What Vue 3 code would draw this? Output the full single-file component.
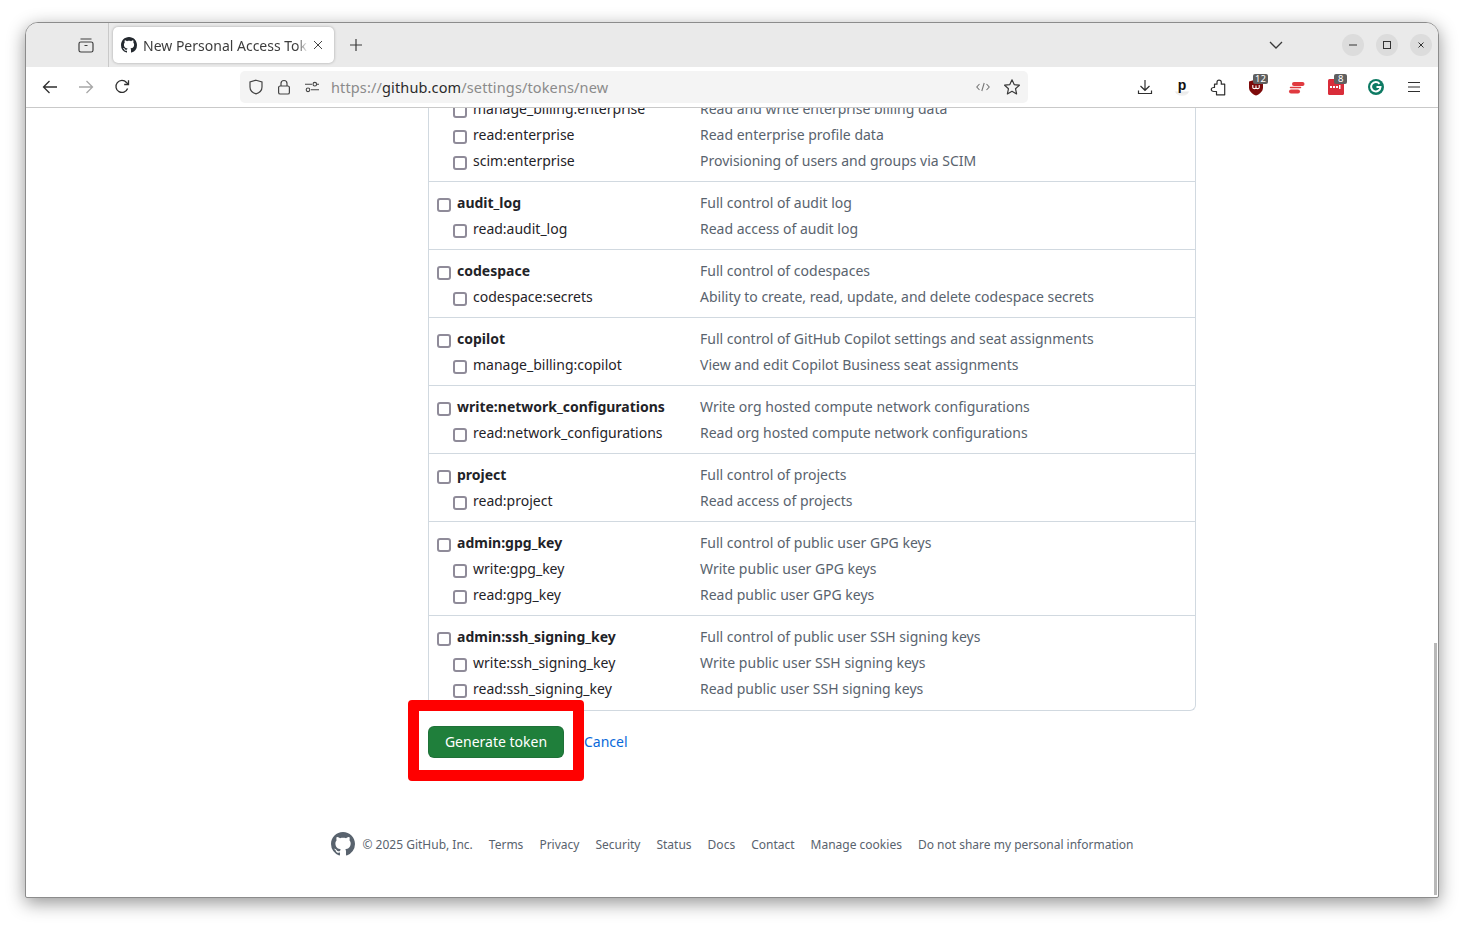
<script setup>
const groups = [
  { rows: [
    { n: 'manage_billing:enterprise', d: 'Read and write enterprise billing data' },
    { n: 'read:enterprise', d: 'Read enterprise profile data' },
    { n: 'scim:enterprise', d: 'Provisioning of users and groups via SCIM' },
  ] },
  { rows: [
    { n: 'audit_log', d: 'Full control of audit log', top: true },
    { n: 'read:audit_log', d: 'Read access of audit log' },
  ] },
  { rows: [
    { n: 'codespace', d: 'Full control of codespaces', top: true },
    { n: 'codespace:secrets', d: 'Ability to create, read, update, and delete codespace secrets' },
  ] },
  { rows: [
    { n: 'copilot', d: 'Full control of GitHub Copilot settings and seat assignments', top: true },
    { n: 'manage_billing:copilot', d: 'View and edit Copilot Business seat assignments' },
  ] },
  { rows: [
    { n: 'write:network_configurations', d: 'Write org hosted compute network configurations', top: true },
    { n: 'read:network_configurations', d: 'Read org hosted compute network configurations' },
  ] },
  { rows: [
    { n: 'project', d: 'Full control of projects', top: true },
    { n: 'read:project', d: 'Read access of projects' },
  ] },
  { rows: [
    { n: 'admin:gpg_key', d: 'Full control of public user GPG keys', top: true },
    { n: 'write:gpg_key', d: 'Write public user GPG keys' },
    { n: 'read:gpg_key', d: 'Read public user GPG keys' },
  ] },
  { rows: [
    { n: 'admin:ssh_signing_key', d: 'Full control of public user SSH signing keys', top: true },
    { n: 'write:ssh_signing_key', d: 'Write public user SSH signing keys' },
    { n: 'read:ssh_signing_key', d: 'Read public user SSH signing keys' },
  ] },
]
const footer = ['Terms', 'Privacy', 'Security', 'Status', 'Docs', 'Contact', 'Manage cookies', 'Do not share my personal information']
const octo = 'M8 0c4.42 0 8 3.58 8 8a8.013 8.013 0 0 1-5.45 7.59c-.4.08-.55-.17-.55-.38 0-.27.01-1.13.01-2.2 0-.75-.25-1.23-.54-1.48 1.78-.2 3.65-.88 3.65-3.95 0-.88-.31-1.59-.82-2.15.08-.2.36-1.02-.08-2.12 0 0-.67-.22-2.2.82-.64-.18-1.32-.27-2-.27-.68 0-1.36.09-2 .27-1.53-1.03-2.2-.82-2.2-.82-.44 1.1-.16 1.92-.08 2.12-.51.56-.82 1.28-.82 2.15 0 3.06 1.86 3.75 3.64 3.95-.23.2-.44.55-.51 1.07-.46.21-1.61.55-2.33-.66-.15-.24-.6-.83-1.23-.82-.67.01-.27.38.01.53.34.19.73.9.82 1.13.16.45.68 1.31 2.69.94 0 .67.01 1.3.01 1.49 0 .21-.15.45-.55.38A7.995 7.995 0 0 1 0 8c0-4.42 3.58-8 8-8Z'
</script>

<template>
  <div class="desk">
  <div class="window">
    <header class="tabbar">
      <div class="tabs-btn">
        <svg width="16" height="16" viewBox="0 0 16 16" fill="none" stroke="#3f3f3f" stroke-width="1.2"><rect x="1" y="5" width="14" height="10" rx="1.8"/><path d="M2.5 2h11M6.5 8.5h3"/></svg>
      </div>
      <div class="tab">
        <svg class="fav" width="16" height="16" viewBox="0 0 16 16" fill="#24292f"><path :d="octo"/></svg>
        <span class="tab-title">New Personal Access Token</span>
        <svg class="tab-x" width="10" height="10" viewBox="0 0 10 10" fill="none" stroke="#444" stroke-width="1"><path d="M1 1l8 8M9 1l-8 8"/></svg>
      </div>
      <svg class="plus" width="14" height="14" viewBox="0 0 14 14" fill="none" stroke="#3a3a3a" stroke-width="1.2"><path d="M7 1v12M1 7h12"/></svg>
      <div class="spacer"></div>
      <svg class="chev" width="14" height="8" viewBox="0 0 14 8" fill="none" stroke="#3a3a3a" stroke-width="1.3"><path d="M1 1l6 6 6-6"/></svg>
      <div class="wbtn first"><svg width="10" height="10" viewBox="0 0 10 10" stroke="#333" stroke-width="1"><path d="M1 5h8"/></svg></div>
      <div class="wbtn"><svg width="10" height="10" viewBox="0 0 10 10" fill="none" stroke="#333" stroke-width="1"><rect x="1.5" y="1.5" width="7" height="7"/></svg></div>
      <div class="wbtn"><svg width="10" height="10" viewBox="0 0 10 10" fill="none" stroke="#333" stroke-width="1"><path d="M2.5 2.5l5 5M7.5 2.5l-5 5"/></svg></div>
    </header>

    <nav class="navbar">
      <div class="nav-left">
        <span class="cell"><svg width="16" height="16" viewBox="0 0 16 16" fill="none" stroke="#2f2f2f" stroke-width="1.3"><path d="M15 8H1.5M7.5 2L1.5 8l6 6"/></svg></span>
        <span class="cell"><svg width="16" height="16" viewBox="0 0 16 16" fill="none" stroke="#a8a8a8" stroke-width="1.3"><path d="M1 8h13.5M8.5 2l6 6-6 6"/></svg></span>
        <span class="cell"><svg width="16" height="16" viewBox="0 0 16 16" fill="none" stroke="#2f2f2f" stroke-width="1.3"><path d="M13.6 9.5A6 6 0 1 1 12.5 3.5L14.5 5.5"/><path d="M14.5 1.2v4.3h-4.3"/></svg></span>
      </div>
      <div class="urlbar">
        <svg class="u-shield" width="16" height="16" viewBox="0 0 16 16" fill="none" stroke="#444" stroke-width="1.2"><path d="M8 1.2l6 1.8v5c0 3.4-2.6 5.8-6 6.8-3.4-1-6-3.4-6-6.8V3z"/></svg>
        <svg class="u-lock" width="14" height="16" viewBox="0 0 14 16" fill="none" stroke="#444" stroke-width="1.2"><rect x="1.6" y="7" width="10.8" height="8" rx="1.6"/><path d="M4 7V4.5a3 3 0 0 1 6 0V7"/></svg>
        <svg class="u-perm" width="16" height="12" viewBox="0 0 16 12" fill="none" stroke="#444" stroke-width="1.1"><circle cx="10.8" cy="3.2" r="1.8"/><circle cx="4" cy="8.8" r="1.8"/><path d="M1 3.2h7M13 3.2h2M7 8.8h8"/></svg>
        <span class="url"><span class="g">https://</span><span class="h">github.com</span><span class="g">/settings/tokens/new</span></span>
        <span class="spacer"></span>
        <svg class="u-code" width="14" height="10" viewBox="0 0 14 10" fill="none" stroke="#777" stroke-width="1.1"><path d="M3.5 2L.8 5l2.7 3M10.5 2l2.7 3-2.7 3M8.2 1L5.8 9"/></svg>
        <svg class="u-star" width="18" height="18" viewBox="0 0 18 18" fill="none" stroke="#3a3a3a" stroke-width="1.2" stroke-linejoin="round"><path d="M9 1.8l2.2 4.8 5.2.6-3.9 3.5 1.1 5.2L9 13.3l-4.6 2.6 1.1-5.2L1.6 7.2l5.2-.6z"/></svg>
      </div>
      <div class="nav-right">
        <svg class="i-dl" width="16" height="16" viewBox="0 0 16 16" fill="none" stroke="#2f2f2f" stroke-width="1.2"><path d="M8 1v10M3.5 7L8 11.3 12.5 7M1.5 11.5v3h13v-3"/></svg>
        <span class="i-p"><b>p</b></span>
        <svg class="i-ext" width="16" height="17" viewBox="0 0 16 17" fill="none" stroke="#2f2f2f" stroke-width="1.2" stroke-linejoin="round"><path d="M9 1.2c1.4 0 2.3.9 2.3 2v2h3.4v10.600H6.500v-3.300H3.800c-1.600 0-2.500-.9-2.500-2s.9-2 2.500-2h.7V5.200h2.500v-2c0-1.100.8-2 2-2z"/></svg>
        <span class="i-ub">
          <svg width="16" height="17" viewBox="0 0 16 17"><path fill="#7d0a0a" d="M8 .5l7 2v6c0 3.800-3 6.500-7 8-4-1.500-7-4.200-7-8v-6z"/><path fill="none" stroke="#fff" stroke-width="1.1" d="M4.800 6v2.500c0 1.500 3.200 1.500 3.200 0V6.500 8.500c0 1.500 3.200 1.500 3.200 0V6"/></svg>
          <em class="badge">12</em>
        </span>
        <svg class="i-ev" width="17" height="13" viewBox="0 0 17 13" fill="none" stroke="#e0393f" stroke-linecap="round"><path stroke-width="4" d="M6 3h8.500"/><path stroke-width="4" d="M3 10.500h7"/><path stroke-width="1.500" d="M2.500 6.600h10"/></svg>
        <span class="i-red">
          <svg width="16" height="16" viewBox="0 0 16 16"><rect width="16" height="16" rx="1.5" fill="#d92d3a"/><g fill="#fff"><rect x="2" y="7" width="2" height="2"/><rect x="5" y="7" width="2" height="2"/><rect x="8" y="7" width="2" height="2"/><rect x="11" y="6" width="1.500" height="4"/></g></svg>
          <em class="badge small">8</em>
        </span>
        <svg class="i-g" width="16" height="16" viewBox="0 0 16 16"><circle cx="8" cy="8" r="8" fill="#0d7a63"/><path fill="none" stroke="#fff" stroke-width="2" d="M11.500 4.800A4.700 4.700 0 1 0 12.500 8H8.500"/></svg>
        <svg class="i-menu" width="14" height="12" viewBox="0 0 14 12" stroke="#2f2f2f" stroke-width="1.2"><path d="M1 1.500h12M1 6h12M1 10.500h12"/></svg>
      </div>
    </nav>

    <main class="page">
      <div class="scopes">
        <section v-for="(g, i) in groups" :key="i" class="group">
          <div v-for="r in g.rows" :key="r.n" class="row" :class="{ top: r.top }">
            <label class="name"><span class="box"></span>{{ r.n }}</label>
            <span class="desc">{{ r.d }}</span>
          </div>
        </section>
      </div>
      <div class="actions">
        <button class="gen">Generate token</button>
        <a class="cancel">Cancel</a>
      </div>
      <footer class="foot">
        <svg class="foot-logo" width="24" height="24" viewBox="0 0 16 16" fill="#59636e"><path :d="octo"/></svg>
        <span class="copy">© 2025 GitHub, Inc.</span>
        <a v-for="f in footer" :key="f">{{ f }}</a>
      </footer>
      <div class="highlight"></div>
      <div class="thumb"></div>
    </main>
  </div>
  </div>
</template>

<style scoped>
.desk {
  width: 1464px;
  height: 926px;
  padding: 22px 0 0 25px;
  box-sizing: border-box;
  background: #fff;
}
.window {
  position: relative;
  width: 1412px;
  height: 874px;
  border: 1px solid #8c8c8c;
  border-radius: 13px 13px 2px 2px;
  box-shadow: 0 5px 18px rgba(0, 0, 0, .42);
  background: #fff;
  overflow: hidden;
  display: flex;
  flex-direction: column;
  font-family: "Noto Sans", sans-serif;
}
.spacer { flex: 1; }

.tabbar {
  height: 44px;
  background: #eaeaea;
  display: flex;
  align-items: center;
  flex: none;
}
.tabs-btn {
  width: 68px;
  height: 44px;
  border-right: 1px solid #c9c9c9;
  display: flex;
  align-items: center;
  justify-content: flex-end;
  padding-right: 14px;
}
.tab {
  margin-left: 4px;
  width: 221px;
  height: 36px;
  background: #fff;
  border-radius: 5px;
  box-shadow: 0 0 3px rgba(0, 0, 0, .3);
  display: flex;
  align-items: center;
  padding-left: 8px;
  box-sizing: border-box;
}
.fav { flex: none; }
.tab-title {
  margin-left: 6px;
  font-size: 14px;
  color: #3d3d3d;
  width: 165px;
  flex: none;
  white-space: nowrap;
  overflow: hidden;
  -webkit-mask-image: linear-gradient(to right, #000 154px, transparent 165px);
  mask-image: linear-gradient(to right, #000 154px, transparent 165px);
}
.tab-x { margin-left: 5px; flex: none; }
.plus { margin-left: 15px; }
.chev { margin-right: 59px; }
.wbtn {
  width: 22px;
  height: 22px;
  border-radius: 50%;
  background: #dcdcdc;
  display: flex;
  align-items: center;
  justify-content: center;
  margin-right: 12px;
}
.wbtn:last-child { margin-right: 6px; }

.navbar {
  height: 40px;
  background: #fff;
  border-bottom: 1px solid #c9c9c9;
  display: flex;
  align-items: center;
  flex: none;
}
.nav-left { display: flex; padding-left: 6px; width: 214px; box-sizing: border-box; }
.cell { width: 36px; display: flex; justify-content: center; }
.urlbar {
  width: 788px;
  height: 32px;
  background: #f4f4f4;
  border-radius: 5px;
  display: flex;
  align-items: center;
}
.u-shield { margin-left: 8px; }
.u-lock { margin-left: 13px; }
.u-perm { margin-left: 13px; }
.url { margin-left: 11px; font-size: 14.5px; letter-spacing: .13px; white-space: nowrap; }
.g { color: #8b8b8b; }
.h { color: #2b2b2b; }
.u-code { margin-right: 13px; }
.u-star { margin-right: 7px; }
.nav-right { display: flex; align-items: center; flex: 1; padding-left: 109px; }
.i-p {
  margin-left: 21px;
  width: 16px;
  height: 18px;
  text-align: center;
  font: 700 14px/14px "Liberation Sans", sans-serif;
  color: #111;
  background: linear-gradient(to bottom, transparent 13px, #e8e8e8 14px, #f4f4f4 18px);
  border-radius: 0 0 8px 8px;
}
.i-ext { margin-left: 20px; }
.i-ub { position: relative; margin-left: 22px; display: flex; }
.i-ev { margin-left: 24px; }
.i-red { position: relative; margin-left: 23px; display: flex; }
.i-g { margin-left: 24px; }
.i-menu { margin-left: 23px; }
.badge {
  position: absolute;
  top: -5px;
  left: 5px;
  height: 10px;
  padding: 0 2px;
  background: #5f5f5f;
  color: #fff;
  font: normal 9.5px/10px "Noto Sans", sans-serif;
  border-radius: 2px;
}
.badge.small { left: 6px; padding: 0 4px; }

.page {
  flex: 1;
  position: relative;
  overflow: hidden;
  min-height: 0;
}
.scopes {
  margin: -20px 0 0 402px;
  width: 768px;
  box-sizing: border-box;
  border: 1px solid #d1d9e0;
  border-top: 0;
  border-radius: 0 0 6px 6px;
}
.group {
  padding: 7px 0 8px;
  border-bottom: 1px solid #d1d9e0;
}
.group:last-child { border-bottom: 0; padding-bottom: 9px; }
.row {
  height: 26px;
  display: flex;
  align-items: center;
  font-size: 14px;
  color: #1f2328;
}
.name {
  width: 271px;
  padding-left: 24px;
  box-sizing: border-box;
  display: flex;
  align-items: center;
  flex: none;
  white-space: nowrap;
}
.row.top .name { padding-left: 8px; font-weight: 700; }
.box {
  width: 10px;
  height: 10px;
  border: 2px solid #8f8b99;
  border-radius: 3px;
  margin-right: 6px;
  flex: none;
  position: relative;
  top: 3px;
  background: #fff;
}
.desc { color: #59636e; white-space: nowrap; }

.actions {
  margin: 15px 0 0 402px;
  display: flex;
  align-items: center;
  gap: 20px;
}
.gen {
  width: 136px;
  height: 32px;
  background: #1f7f3b;
  color: #fff;
  border: 1px solid rgba(31, 35, 40, .15);
  border-radius: 6px;
  font: 400 14px "Noto Sans", sans-serif;
  padding: 0 0 2px;
}
.cancel { font-size: 14px; color: #0969da; margin-bottom: 2px; }

.foot {
  margin: 74px 0 0 305px;
  display: flex;
  align-items: center;
  font-size: 12px;
  color: #59636e;
  white-space: nowrap;
}
.foot-logo { margin-right: 7.5px; }
.foot a { margin-left: 16px; }

.highlight {
  position: absolute;
  left: 382px;
  top: 592px;
  width: 176px;
  height: 81px;
  box-sizing: border-box;
  border: 11px solid #f00;
  border-radius: 4px;
}
.thumb {
  position: absolute;
  right: 1px;
  top: 535px;
  width: 3px;
  height: 252px;
  background: #b8b8b8;
}
</style>

<style>
html { background: #fff; overflow: hidden; }
</style>
